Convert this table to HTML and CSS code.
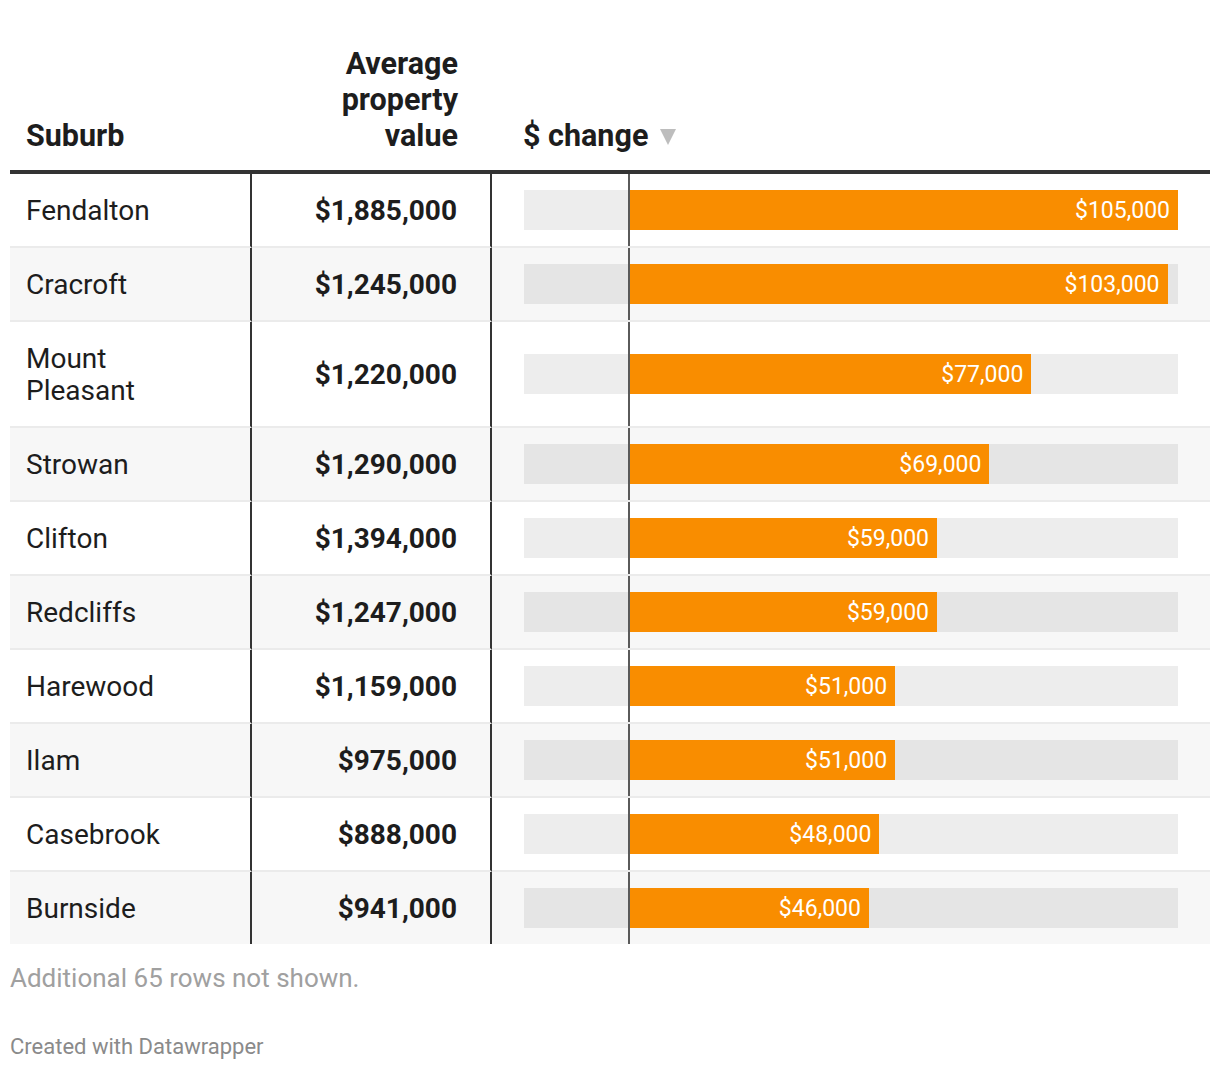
FILE: index.html
```html
<!DOCTYPE html>
<html lang="en">
<head>
<meta charset="utf-8">
<title>Suburb property values</title>
<link rel="stylesheet" href="styles.css">
</head>
<body>
<div class="chart">
  <div class="table">
    <div class="row head">
      <div class="cell c1">Suburb</div>
      <div class="cell c2">Average<br>property<br>value</div>
      <div class="cell c3">$ change <svg class="sort" width="16" height="16" viewBox="0 0 16 16"><polygon points="0,0 16,0 8,16" fill="#bdbdbd"/></svg></div>
    </div>
    <div class="row">
      <div class="cell c1">Fendalton</div>
      <div class="cell c2">$1,885,000</div>
      <div class="cell c3"><div class="track"><div class="neg"></div><div class="pos"><div class="bar" style="width:100%">$105,000</div></div></div></div>
    </div>
    <div class="row alt">
      <div class="cell c1">Cracroft</div>
      <div class="cell c2">$1,245,000</div>
      <div class="cell c3"><div class="track"><div class="neg"></div><div class="pos"><div class="bar" style="width:98.095%">$103,000</div></div></div></div>
    </div>
    <div class="row">
      <div class="cell c1">Mount<br>Pleasant</div>
      <div class="cell c2">$1,220,000</div>
      <div class="cell c3"><div class="track"><div class="neg"></div><div class="pos"><div class="bar" style="width:73.333%">$77,000</div></div></div></div>
    </div>
    <div class="row alt">
      <div class="cell c1">Strowan</div>
      <div class="cell c2">$1,290,000</div>
      <div class="cell c3"><div class="track"><div class="neg"></div><div class="pos"><div class="bar" style="width:65.714%">$69,000</div></div></div></div>
    </div>
    <div class="row">
      <div class="cell c1">Clifton</div>
      <div class="cell c2">$1,394,000</div>
      <div class="cell c3"><div class="track"><div class="neg"></div><div class="pos"><div class="bar" style="width:56.190%">$59,000</div></div></div></div>
    </div>
    <div class="row alt">
      <div class="cell c1">Redcliffs</div>
      <div class="cell c2">$1,247,000</div>
      <div class="cell c3"><div class="track"><div class="neg"></div><div class="pos"><div class="bar" style="width:56.190%">$59,000</div></div></div></div>
    </div>
    <div class="row">
      <div class="cell c1">Harewood</div>
      <div class="cell c2">$1,159,000</div>
      <div class="cell c3"><div class="track"><div class="neg"></div><div class="pos"><div class="bar" style="width:48.571%">$51,000</div></div></div></div>
    </div>
    <div class="row alt">
      <div class="cell c1">Ilam</div>
      <div class="cell c2">$975,000</div>
      <div class="cell c3"><div class="track"><div class="neg"></div><div class="pos"><div class="bar" style="width:48.571%">$51,000</div></div></div></div>
    </div>
    <div class="row">
      <div class="cell c1">Casebrook</div>
      <div class="cell c2">$888,000</div>
      <div class="cell c3"><div class="track"><div class="neg"></div><div class="pos"><div class="bar" style="width:45.714%">$48,000</div></div></div></div>
    </div>
    <div class="row alt last">
      <div class="cell c1">Burnside</div>
      <div class="cell c2">$941,000</div>
      <div class="cell c3"><div class="track"><div class="neg"></div><div class="pos"><div class="bar" style="width:43.810%">$46,000</div></div></div></div>
    </div>
  </div>
  <p class="note">Additional 65 rows not shown.</p>
  <p class="credit">Created with Datawrapper</p>
</div>
</body>
</html>
```

FILE: styles.css
```css
* { box-sizing: border-box; }
html, body { margin: 0; padding: 0; background: #fff; }
body {
  font-family: Roboto, "Liberation Sans", sans-serif;
  color: #1d1d1d;
}
.chart { padding: 46px 10px 0 10px; }
.table { display: flex; flex-direction: column; }
.row {
  display: grid;
  grid-template-columns: 242px 240px 1fr;
}
.row.alt { background: #f7f7f7; }
.cell {
  display: flex;
  align-items: center;
  font-size: 28px;
  line-height: 32px;
  padding: 21px 0 19px 0;
  border-bottom: 2px solid #ebebeb;
}
.row.last .cell { border-bottom: none; }
.cell.c1 { padding-left: 16px; border-right: 2px solid #333; }
.cell.c2 {
  justify-content: flex-end;
  text-align: right;
  padding-right: 33px;
  font-weight: 700;
  border-right: 2px solid #333;
}
.cell.c3 {
  position: relative;
  padding: 16px 32px;
}
.cell.c3::before {
  content: "";
  position: absolute;
  left: 136px;
  top: 0;
  bottom: 0;
  width: 2px;
  background: #5a5a5a;
  z-index: 2;
}
.row.head .cell {
  align-items: flex-end;
  font-size: 30.5px;
  line-height: 36px;
  font-weight: 700;
  padding: 0 0 16px 0;
  border-bottom: 4px solid #333;
  border-right: none;
}
.row.head .c1 { padding-left: 16px; }
.row.head .c2 { padding-right: 34px; }
.row.head .c3 { padding-left: 31px; }
.row.head .c3::before { display: none; }
.sort { margin-left: 12px; margin-bottom: 9px; }
.track {
  display: flex;
  width: 100%;
  height: 40px;
  background: rgba(0, 0, 0, 0.07);
}
.neg { flex: none; width: 104px; }
.pos { flex: 1; display: flex; }
.bar {
  height: 40px;
  background: #f98d00;
  color: #fff;
  font-size: 23px;
  line-height: 42px;
  text-align: right;
  padding-right: 8px;
  white-space: nowrap;
}
.note {
  margin: 18px 0 0 0;
  font-size: 26px;
  line-height: 32px;
  color: #a0a0a0;
}
.credit {
  margin: 40px 0 0 0;
  font-size: 22px;
  line-height: 26px;
  color: #8a8a8a;
}
```
